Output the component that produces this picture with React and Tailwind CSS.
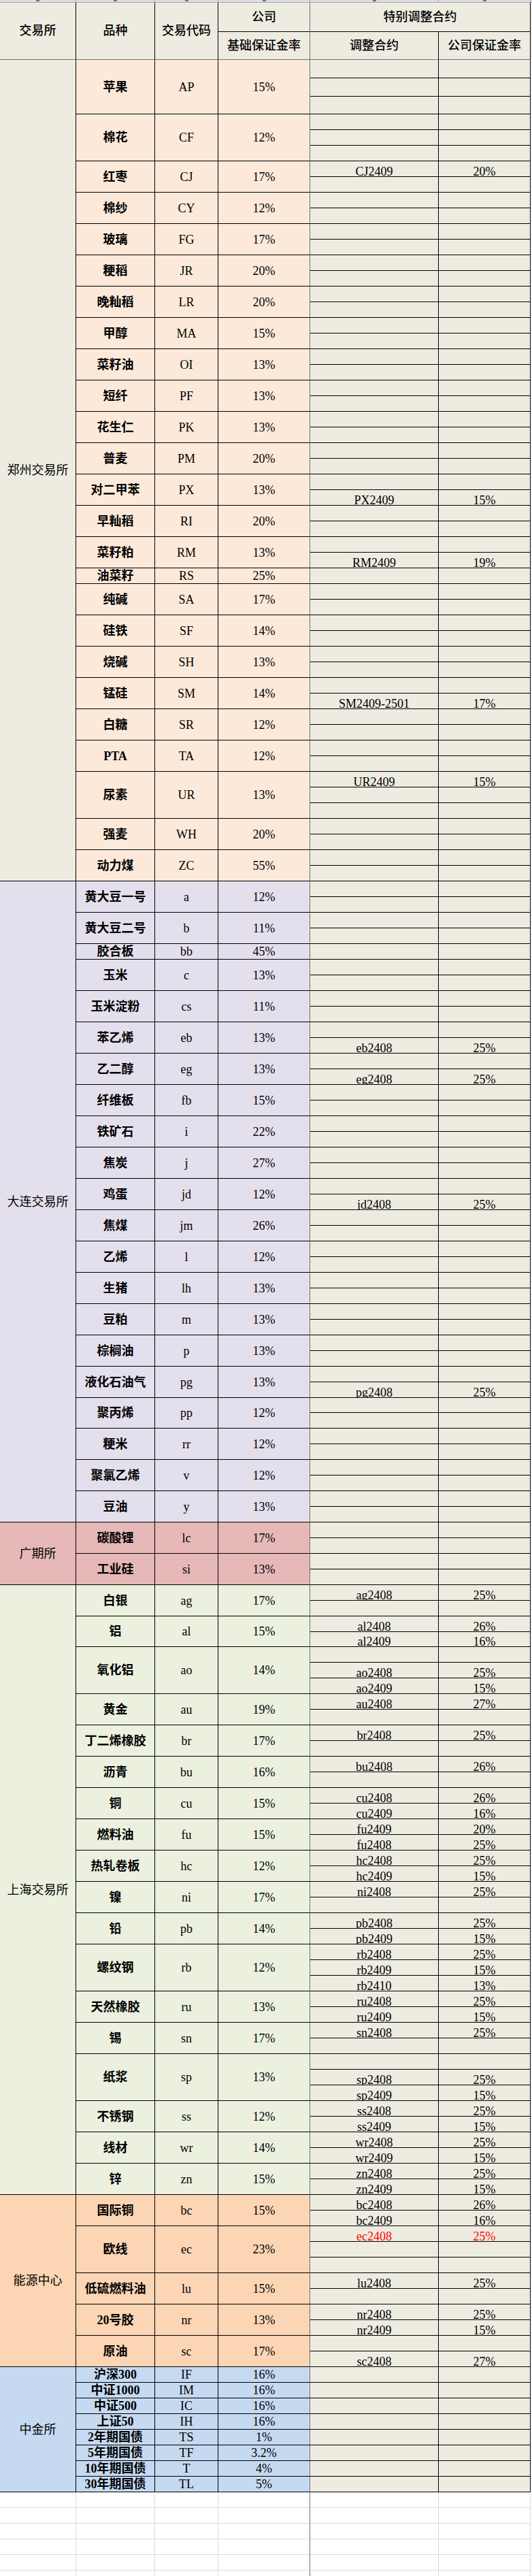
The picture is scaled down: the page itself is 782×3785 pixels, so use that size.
const ZHENGZHOU = [
  { name: '苹果', code: 'AP', rate: '15%', sub: 3, hs: ['h-[27px]', 'h-[27px]', 'h-[26px]'] },
  { name: '棉花', code: 'CF', rate: '12%', sub: 3 },
  { name: '红枣', code: 'CJ', rate: '17%', sub: [['CJ2409', '20%'], null] },
  { name: '棉纱', code: 'CY', rate: '12%', sub: 2 },
  { name: '玻璃', code: 'FG', rate: '17%', sub: 2 },
  { name: '粳稻', code: 'JR', rate: '20%', sub: 2 },
  { name: '晚籼稻', code: 'LR', rate: '20%', sub: 2 },
  { name: '甲醇', code: 'MA', rate: '15%', sub: 2 },
  { name: '菜籽油', code: 'OI', rate: '13%', sub: 2 },
  { name: '短纤', code: 'PF', rate: '13%', sub: 2 },
  { name: '花生仁', code: 'PK', rate: '13%', sub: 2 },
  { name: '普麦', code: 'PM', rate: '20%', sub: 2 },
  { name: '对二甲苯', code: 'PX', rate: '13%', sub: [null, ['PX2409', '15%']] },
  { name: '早籼稻', code: 'RI', rate: '20%', sub: 2 },
  { name: '菜籽粕', code: 'RM', rate: '13%', sub: [null, ['RM2409', '19%']] },
  { name: '油菜籽', code: 'RS', rate: '25%', sub: 1 },
  { name: '纯碱', code: 'SA', rate: '17%', sub: 2 },
  { name: '硅铁', code: 'SF', rate: '14%', sub: 2 },
  { name: '烧碱', code: 'SH', rate: '13%', sub: 2 },
  { name: '锰硅', code: 'SM', rate: '14%', sub: [null, ['SM2409-2501', '17%']] },
  { name: '白糖', code: 'SR', rate: '12%', sub: 2 },
  { name: 'PTA', code: 'TA', rate: '12%', sub: 2 },
  { name: '尿素', code: 'UR', rate: '13%', sub: [['UR2409', '15%'], null, null] },
  { name: '强麦', code: 'WH', rate: '20%', sub: 2 },
  { name: '动力煤', code: 'ZC', rate: '55%', sub: 2 },
]

const DALIAN = [
  { name: '黄大豆一号', code: 'a', rate: '12%', sub: 2 },
  { name: '黄大豆二号', code: 'b', rate: '11%', sub: 2 },
  { name: '胶合板', code: 'bb', rate: '45%', sub: 1 },
  { name: '玉米', code: 'c', rate: '13%', sub: 2 },
  { name: '玉米淀粉', code: 'cs', rate: '11%', sub: 2 },
  { name: '苯乙烯', code: 'eb', rate: '13%', sub: [null, ['eb2408', '25%']] },
  { name: '乙二醇', code: 'eg', rate: '13%', sub: [null, ['eg2408', '25%']] },
  { name: '纤维板', code: 'fb', rate: '15%', sub: 2 },
  { name: '铁矿石', code: 'i', rate: '22%', sub: 2 },
  { name: '焦炭', code: 'j', rate: '27%', sub: 2 },
  { name: '鸡蛋', code: 'jd', rate: '12%', sub: [null, ['jd2408', '25%']] },
  { name: '焦煤', code: 'jm', rate: '26%', sub: 2 },
  { name: '乙烯', code: 'l', rate: '12%', sub: 2 },
  { name: '生猪', code: 'lh', rate: '13%', sub: 2 },
  { name: '豆粕', code: 'm', rate: '13%', sub: 2 },
  { name: '棕榈油', code: 'p', rate: '13%', sub: 2 },
  { name: '液化石油气', code: 'pg', rate: '13%', sub: [null, ['pg2408', '25%']] },
  { name: '聚丙烯', code: 'pp', rate: '12%', sub: 2, hs: ['h-[22px]', 'h-[23px]'] },
  { name: '粳米', code: 'rr', rate: '12%', sub: 2 },
  { name: '聚氯乙烯', code: 'v', rate: '12%', sub: 2 },
  { name: '豆油', code: 'y', rate: '13%', sub: 2 },
]

const GUANGZHOU = [
  { name: '碳酸锂', code: 'lc', rate: '17%', sub: 2 },
  { name: '工业硅', code: 'si', rate: '13%', sub: 2 },
]

const SHANGHAI = [
  { name: '白银', code: 'ag', rate: '17%', sub: [['ag2408', '25%'], null] },
  { name: '铝', code: 'al', rate: '15%', sub: [['al2408', '26%'], ['al2409', '16%']], hs: ['h-[23px]', 'h-[22px]'] },
  { name: '氧化铝', code: 'ao', rate: '14%', sub: [null, ['ao2408', '25%'], ['ao2409', '15%']] },
  { name: '黄金', code: 'au', rate: '19%', sub: [['au2408', '27%'], null] },
  { name: '丁二烯橡胶', code: 'br', rate: '17%', sub: [['br2408', '25%'], null] },
  { name: '沥青', code: 'bu', rate: '16%', sub: [['bu2408', '26%'], null] },
  { name: '铜', code: 'cu', rate: '15%', sub: [['cu2408', '26%'], ['cu2409', '16%']] },
  { name: '燃料油', code: 'fu', rate: '15%', sub: [['fu2409', '20%'], ['fu2408', '25%']] },
  { name: '热轧卷板', code: 'hc', rate: '12%', sub: [['hc2408', '25%'], ['hc2409', '15%']] },
  { name: '镍', code: 'ni', rate: '17%', sub: [['ni2408', '25%'], null] },
  { name: '铅', code: 'pb', rate: '14%', sub: [['pb2408', '25%'], ['pb2409', '15%']] },
  { name: '螺纹钢', code: 'rb', rate: '12%', sub: [['rb2408', '25%'], ['rb2409', '15%'], ['rb2410', '13%']] },
  { name: '天然橡胶', code: 'ru', rate: '13%', sub: [['ru2408', '25%'], ['ru2409', '15%']] },
  { name: '锡', code: 'sn', rate: '17%', sub: [['sn2408', '25%'], null] },
  { name: '纸浆', code: 'sp', rate: '13%', sub: [null, ['sp2408', '25%'], ['sp2409', '15%']] },
  { name: '不锈钢', code: 'ss', rate: '12%', sub: [['ss2408', '25%'], ['ss2409', '15%']] },
  { name: '线材', code: 'wr', rate: '14%', sub: [['wr2408', '25%'], ['wr2409', '15%']] },
  { name: '锌', code: 'zn', rate: '15%', sub: [['zn2408', '25%'], ['zn2409', '15%']] },
]

const ENERGY = [
  { name: '国际铜', code: 'bc', rate: '15%', sub: [['bc2408', '26%'], ['bc2409', '16%']] },
  { name: '欧线', code: 'ec', rate: '23%', sub: [['ec2408', '25%', true], null, null] },
  { name: '低硫燃料油', code: 'lu', rate: '15%', sub: [['lu2408', '25%'], null] },
  { name: '20号胶', code: 'nr', rate: '13%', sub: [['nr2408', '25%'], ['nr2409', '15%']] },
  { name: '原油', code: 'sc', rate: '17%', sub: [null, ['sc2408', '27%']] },
]

const CFFEX = [
  { name: '沪深300', code: 'IF', rate: '16%', sub: 1 },
  { name: '中证1000', code: 'IM', rate: '16%', sub: 1 },
  { name: '中证500', code: 'IC', rate: '16%', sub: 1 },
  { name: '上证50', code: 'IH', rate: '16%', sub: 1 },
  { name: '2年期国债', code: 'TS', rate: '1%', sub: 1 },
  { name: '5年期国债', code: 'TF', rate: '3.2%', sub: 1 },
  { name: '10年期国债', code: 'T', rate: '4%', sub: 1 },
  { name: '30年期国债', code: 'TL', rate: '5%', sub: 1 },
]

const EXCHANGES = [
  { name: '郑州交易所', bg: 'bg-[#eeece1]', cell: 'bg-[#fde9d9]', items: ZHENGZHOU },
  { name: '大连交易所', bg: 'bg-[#e4dfec]', cell: 'bg-[#e4dfec]', items: DALIAN },
  { name: '广期所', bg: 'bg-[#e6b8b7]', cell: 'bg-[#e6b8b7]', items: GUANGZHOU },
  { name: '上海交易所', bg: 'bg-[#ebf1de]', cell: 'bg-[#ebf1de]', items: SHANGHAI },
  { name: '能源中心', bg: 'bg-[#fcd5b4]', cell: 'bg-[#fcd5b4]', items: ENERGY },
  { name: '中金所', bg: 'bg-[#c5d9f1]', cell: 'bg-[#c5d9f1]', items: CFFEX },
]

function Item({ item, cell }) {
  const subs = typeof item.sub === 'number' ? Array(item.sub).fill(null) : item.sub

  return (
    <div className="flex">
      <div className={`${cell} w-[116px] border-r border-b border-r-black border-b-black flex items-center justify-center font-bold leading-none whitespace-nowrap`}>
        {item.name}
      </div>
      <div className={`${cell} w-[93px] border-r border-b border-r-black border-b-black flex items-center justify-center leading-none`}>
        {item.code}
      </div>
      <div className={`${cell} w-[135px] border-r border-b border-r-[#707070] border-b-black flex items-center justify-center leading-none`}>
        {item.rate}
      </div>
      <div className="flex flex-col w-[324px]">
        {subs.map((s, i) => (
          <div key={i} className={`flex bg-[#eeece1] ${item.hs ? item.hs[i] : 'h-[23px]'}`}>
            <div className={`w-[189px] border-r border-b border-r-black border-b-black flex items-end justify-center leading-[14px] ${s && s[2] ? 'text-[#ff0000]' : ''}`}>
              {s ? s[0] : ''}
            </div>
            <div className={`w-[135px] border-r border-b border-r-black border-b-black flex items-end justify-center leading-[14px] ${s && s[2] ? 'text-[#ff0000]' : ''}`}>
              {s ? s[1] : ''}
            </div>
          </div>
        ))}
      </div>
    </div>
  )
}

function Header() {
  return (
    <div className="flex h-[84px] bg-[#eeece1] font-medium">
      <div className="w-[112px] border-r border-b border-r-black border-b-[#707070] flex items-center justify-center">交易所</div>
      <div className="w-[116px] border-r border-b border-r-black border-b-[#707070] flex items-center justify-center">品种</div>
      <div className="w-[93px] border-r border-b border-r-black border-b-[#707070] flex items-center justify-center">交易代码</div>
      <div className="w-[135px] flex flex-col border-r border-r-[#707070]">
        <div className="h-[43px] border-b border-b-black flex items-center justify-center">公司</div>
        <div className="flex-1 border-b border-b-[#707070] flex items-center justify-center">基础保证金率</div>
      </div>
      <div className="w-[324px] flex flex-col">
        <div className="h-[43px] border-r border-b border-r-black border-b-black flex items-center justify-center">特别调整合约</div>
        <div className="flex-1 flex">
          <div className="w-[189px] border-r border-b border-r-black border-b-[#707070] flex items-center justify-center">调整合约</div>
          <div className="w-[135px] border-r border-b border-r-black border-b-[#707070] flex items-center justify-center">公司保证金率</div>
        </div>
      </div>
    </div>
  )
}

function ColumnStrip() {
  const cols = ['w-[112px]', 'w-[116px]', 'w-[93px]', 'w-[135px]', 'w-[189px]', 'w-[135px]']
  return (
    <div className="flex h-[4px] bg-[#dcdfe2] border-b border-b-[#a3a7ab]">
      {cols.map((w, i) => (
        <div key={i} className={`${w} border-r border-r-[#9ea2a6] flex justify-center`}>
          <div className="w-[5px] h-[2px] bg-[#6b6f73]" />
        </div>
      ))}
    </div>
  )
}

function EmptyRows() {
  return (
    <div className="flex flex-col">
      {[0, 1, 2, 3, 4, 5].map((i) => (
        <div key={i} className="flex h-[23px] bg-white">
          <div className="w-[112px] border-r border-b border-r-[#dadada] border-b-[#dadada]" />
          <div className="w-[116px] border-r border-b border-r-[#dadada] border-b-[#dadada]" />
          <div className="w-[93px] border-r border-b border-r-[#dadada] border-b-[#dadada]" />
          <div className="w-[135px] border-r border-b border-r-[#707070] border-b-[#dadada]" />
          <div className="w-[189px] border-r border-b border-r-[#dadada] border-b-[#dadada]" />
          <div className="w-[135px] border-r border-b border-r-[#dadada] border-b-[#dadada]" />
        </div>
      ))}
    </div>
  )
}

export default function App() {
  return (
    <div className="w-[782px] bg-white text-black text-[18px] font-['Liberation_Serif','Noto_Sans_CJK_SC',serif] overflow-hidden">
      <ColumnStrip />
      <Header />
      {EXCHANGES.map((ex) => (
        <div key={ex.name} className="flex">
          <div className={`${ex.bg} w-[112px] border-r border-b border-r-black border-b-black flex items-center justify-center leading-none whitespace-nowrap`}>
            {ex.name}
          </div>
          <div className="flex flex-col">
            {ex.items.map((item) => (
              <Item key={item.code} item={item} cell={ex.cell} />
            ))}
          </div>
        </div>
      ))}
      <EmptyRows />
    </div>
  )
}
